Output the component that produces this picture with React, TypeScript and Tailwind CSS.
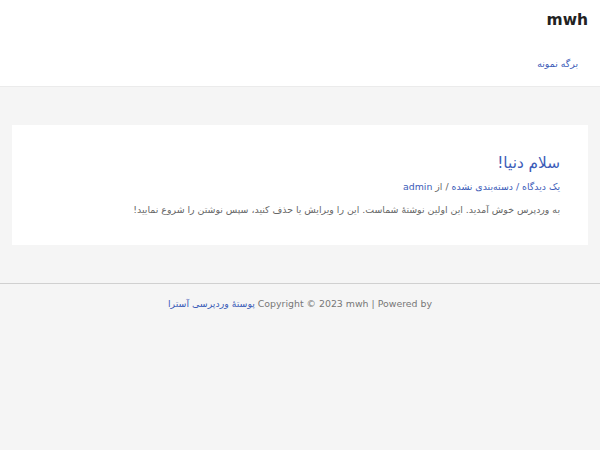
import React from "react";

export default function App() {
  return (
    <div
      dir="rtl"
      className="min-h-[450px] bg-[#f5f5f5] text-[#3a3a3a]"
      style={{ fontFamily: '"DejaVu Sans", sans-serif' }}
    >
      {/* Header */}
      <header className="bg-white border-b border-[#ebebeb] h-[87px] px-3">
        <div className="flex flex-col items-start">
          <div className="pt-[10px] text-[15.5px] font-bold text-[#222] leading-[20px]">mwh</div>
          <nav className="pt-[20px] pr-[10px]">
            <a className="text-[9.4px] text-[#3b5cb8] leading-[14px]">برگه نمونه</a>
          </nav>
        </div>
      </header>

      {/* Post */}
      <main className="px-3 pt-[38px] pb-[38px]">
        <article className="bg-white h-[120px] px-[28px] pt-[28px]">
          <h2 className="text-[15.3px] leading-[20px] text-[#3b5cb8]">سلام دنیا!</h2>
          <div className="mt-[7px] text-[9.4px] leading-[14px] text-[#3b5cb8]">
            <span>یک دیدگاه</span>
            <span> / </span>
            <span>دسته‌بندی نشده</span>
            <span className="text-[#666]"> / از </span>
            <span>admin</span>
          </div>
          <p className="mt-[9px] text-[9.4px] leading-[14px] text-[#666]">
            به وردپرس خوش آمدید. این اولین نوشتهٔ شماست. این را ویرایش یا حذف کنید، سپس نوشتن را شروع نمایید!
          </p>
        </article>
      </main>

      {/* Footer */}
      <footer className="border-t border-[#d0d0d0] pt-[13px]">
        <div className="text-center text-[9.4px] leading-[14px] text-[#777]">
          Copyright © 2023 mwh | Powered by <a className="text-[#3b5cb8]">پوستهٔ وردپرسی آسترا</a>
        </div>
      </footer>
    </div>
  );
}
